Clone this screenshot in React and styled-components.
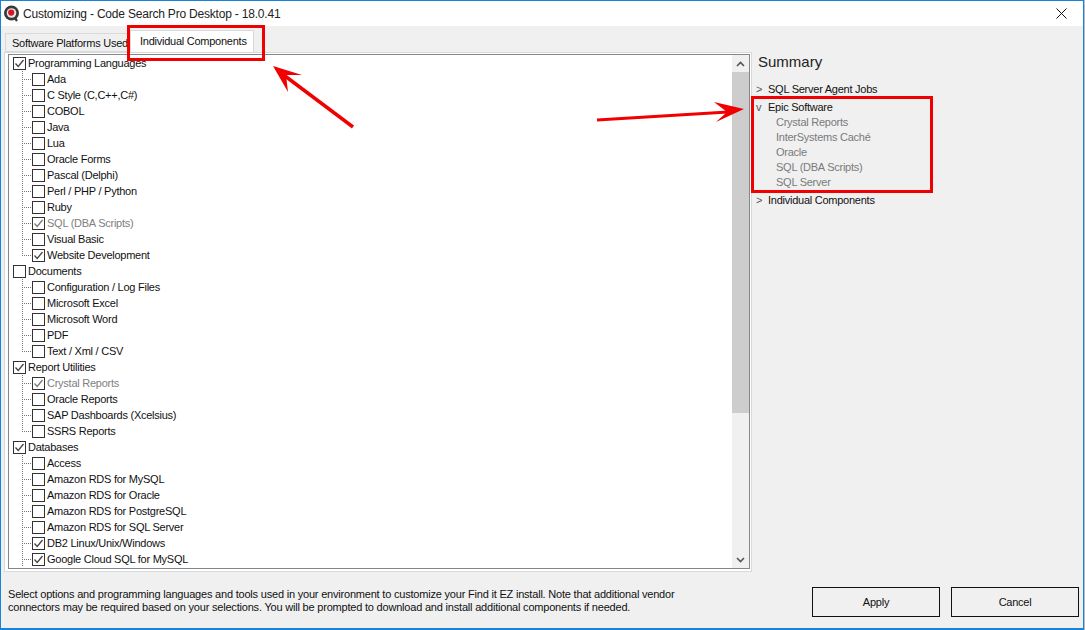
import styled, { createGlobalStyle } from 'styled-components';

const GlobalStyle = createGlobalStyle`
  html, body { margin: 0; padding: 0; background: #b9bcbf; }
  body { font-family: "Liberation Sans", Arial, sans-serif; }
  * { box-sizing: border-box; }
`;

const TREE = [
  { label: 'Programming Languages', checked: true, items: [
    { label: 'Ada' }, { label: 'C Style (C,C++,C#)' }, { label: 'COBOL' }, { label: 'Java' }, { label: 'Lua' },
    { label: 'Oracle Forms' }, { label: 'Pascal (Delphi)' }, { label: 'Perl / PHP / Python' }, { label: 'Ruby' },
    { label: 'SQL (DBA Scripts)', checked: true, disabled: true }, { label: 'Visual Basic' },
    { label: 'Website Development', checked: true },
  ] },
  { label: 'Documents', items: [
    { label: 'Configuration / Log Files' }, { label: 'Microsoft Excel' }, { label: 'Microsoft Word' }, { label: 'PDF' },
    { label: 'Text / Xml / CSV' },
  ] },
  { label: 'Report Utilities', checked: true, items: [
    { label: 'Crystal Reports', checked: true, disabled: true }, { label: 'Oracle Reports' },
    { label: 'SAP Dashboards (Xcelsius)' }, { label: 'SSRS Reports' },
  ] },
  { label: 'Databases', checked: true, open: true, items: [
    { label: 'Access' }, { label: 'Amazon RDS for MySQL' }, { label: 'Amazon RDS for Oracle' },
    { label: 'Amazon RDS for PostgreSQL' }, { label: 'Amazon RDS for SQL Server' },
    { label: 'DB2 Linux/Unix/Windows', checked: true }, { label: 'Google Cloud SQL for MySQL', checked: true },
  ] },
];

const EPIC = ['Crystal Reports', 'InterSystems Caché', 'Oracle', 'SQL (DBA Scripts)', 'SQL Server'];

const Window = styled.div`
  position: relative;
  width: 1084px;
  height: 630px;
  display: flex;
  flex-direction: column;
  overflow: hidden;
  background: #f0f0f0;
  border-top: 1px solid #1883d7;
  border-left: 1px solid #1883d7;
  border-right: 1px solid #1883d7;
  border-bottom: 2px solid #1883d7;
  font-size: 11px;
  letter-spacing: -0.25px;
  color: #111;
`;

const TitleBar = styled.div`
  height: 25px;
  flex: none;
  display: flex;
  align-items: center;
  padding: 0 16px 0 2px;
  background: #fff;
`;

const TitleText = styled.span`
  margin-left: 3px;
  font-size: 12px;
  letter-spacing: -0.2px;
  color: #222;
`;

const CloseButton = styled.svg`
  margin-left: auto;
  width: 11px;
  height: 11px;
`;

const Main = styled.div`
  display: flex;
  padding-left: 3px;
`;

const TabArea = styled.div`
  width: 748px;
  flex: none;
`;

const TabStrip = styled.div`
  height: 26px;
  display: flex;
  align-items: flex-end;
  padding-left: 1px;
`;

const Tab = styled.div`
  height: ${(p) => (p.$active ? '22px' : '19px')};
  width: ${(p) => (p.$active ? '124px' : '125px')};
  padding: ${(p) => (p.$active ? '4px 0 0 9px' : '3px 0 0 6px')};
  background: ${(p) => (p.$active ? '#fff' : '#f0f0f0')};
  border: 1px solid #d9d9d9;
  border-bottom: ${(p) => (p.$active ? '0' : '1px solid #d9d9d9')};
  white-space: nowrap;
`;

const TabPanel = styled.div`
  height: 520px;
  padding: 1px 1px 2px 3px;
  background: #fff;
  border: 1px solid #d9d9d9;
`;

const TreeBox = styled.div`
  height: 100%;
  display: flex;
  border: 1px solid #828790;
  background: #fff;
`;

const TreeList = styled.div`
  flex: 1;
  padding: 0 0 0 4px;
  overflow: hidden;
`;

const Row = styled.div`
  height: 16px;
  display: flex;
  align-items: center;
  white-space: nowrap;
  color: ${(p) => (p.$disabled ? '#808080' : '#111')};
`;

const Connector = styled.span`
  width: 10px;
  height: 16px;
  margin-left: 9px;
  flex: none;
  background-image:
    repeating-linear-gradient(to bottom, #777 0 1px, transparent 1px 2px),
    repeating-linear-gradient(to right, #777 0 1px, transparent 1px 2px);
  background-size: 1px ${(p) => (p.$end ? '9px' : '16px')}, 10px 1px;
  background-position: 0 0, 0 8px;
  background-repeat: no-repeat;
`;

const Box = styled.span`
  width: 13px;
  height: 13px;
  flex: none;
  margin-right: 2px;
  display: flex;
  align-items: center;
  justify-content: center;
  background: #fff;
  border: 1px solid #333;
`;

const Check = styled.svg`
  width: 11px;
  height: 11px;
`;

const ScrollBar = styled.div`
  width: 17px;
  flex: none;
  display: flex;
  flex-direction: column;
  background: #f0f0f0;
`;

const ScrollArrow = styled.div`
  height: 17px;
  flex: none;
  display: flex;
  align-items: center;
  justify-content: center;
`;

const ScrollThumb = styled.div`
  height: 341px;
  flex: none;
  background: #cdcdcd;
`;

const ScrollGap = styled.div`
  flex: 1;
`;

const Summary = styled.div`
  flex: 1;
  padding: 0 0 0 4px;
`;

const SummaryTitle = styled.div`
  padding: 27px 0 0 2px;
  margin-bottom: 11px;
  font-size: 15px;
  letter-spacing: 0;
  line-height: 18px;
  color: #222;
`;

const SummaryRow = styled.div`
  height: 15px;
  line-height: 15px;
  display: flex;
  margin-top: ${(p) => (p.$first ? '0' : '3px')};
`;

const Chevron = styled.span`
  width: 12px;
  flex: none;
  color: #555;
`;

const SummaryItem = styled.div`
  height: 15px;
  line-height: 15px;
  padding-left: 20px;
  color: #7a7a7a;
`;

const Footer = styled.div`
  display: flex;
  padding: 15px 4px 0 7px;
`;

const Note = styled.p`
  width: 720px;
  margin: 0;
  padding-top: 1px;
  line-height: 13px;
  letter-spacing: -0.2px;
  color: #111;
`;

const Buttons = styled.div`
  margin-left: auto;
  display: flex;
  gap: 11px;
`;

const Button = styled.button`
  width: 128px;
  height: 30px;
  background: #f0f0f0;
  border: 1px solid #111;
  font: inherit;
  letter-spacing: inherit;
  color: #111;
  padding: 0;
`;

const Annotations = styled.svg`
  position: absolute;
  left: -1px;
  top: -1px;
  width: 1085px;
  height: 630px;
  pointer-events: none;
`;

function CheckBox({ checked, disabled }) {
  return (
    <Box>
      {checked && (
        <Check viewBox="0 0 11 11">
          <path d="M1.5 5.5 L4.2 8.5 L9.5 2" fill="none" stroke={disabled ? '#777' : '#444'} strokeWidth="1.3" />
        </Check>
      )}
    </Box>
  );
}

function Logo() {
  return (
    <svg width="17" height="17" viewBox="0 0 17 17">
      <path d="M10.5 11 L14 16" stroke="#3a3a3a" strokeWidth="2.2" />
      <circle cx="8.5" cy="8" r="7.5" fill="#3a3a3a" />
      <circle cx="8.5" cy="8" r="4.8" fill="#e9e4e4" />
      <circle cx="8.2" cy="7.6" r="3.1" fill="#d3142c" />
    </svg>
  );
}

function Tree() {
  return (
    <TreeList>
      {TREE.map((group) => (
        <div key={group.label}>
          <Row>
            <CheckBox checked={group.checked} />
            {group.label}
          </Row>
          {group.items.map((item, i) => (
            <Row key={item.label} $disabled={item.disabled}>
              <Connector $end={!group.open && i === group.items.length - 1} />
              <CheckBox checked={item.checked} disabled={item.disabled} />
              {item.label}
            </Row>
          ))}
        </div>
      ))}
    </TreeList>
  );
}

export default function App() {
  return (
    <Window>
      <GlobalStyle />
      <TitleBar>
        <Logo />
        <TitleText>Customizing - Code Search Pro Desktop - 18.0.41</TitleText>
        <CloseButton viewBox="0 0 11 11">
          <path d="M.5 .5 L10.5 10.5 M10.5 .5 L.5 10.5" stroke="#111" strokeWidth="1" fill="none" />
        </CloseButton>
      </TitleBar>
      <Main>
        <TabArea>
          <TabStrip>
            <Tab>Software Platforms Used</Tab>
            <Tab $active>Individual Components</Tab>
          </TabStrip>
          <TabPanel>
            <TreeBox>
              <Tree />
              <ScrollBar>
                <ScrollArrow>
                  <svg width="9" height="6" viewBox="0 0 9 6">
                    <path d="M1 5 L4.5 1.5 L8 5" fill="none" stroke="#555" strokeWidth="1.6" />
                  </svg>
                </ScrollArrow>
                <ScrollThumb />
                <ScrollGap />
                <ScrollArrow>
                  <svg width="9" height="6" viewBox="0 0 9 6">
                    <path d="M1 1 L4.5 4.5 L8 1" fill="none" stroke="#555" strokeWidth="1.6" />
                  </svg>
                </ScrollArrow>
              </ScrollBar>
            </TreeBox>
          </TabPanel>
        </TabArea>
        <Summary>
          <SummaryTitle>Summary</SummaryTitle>
          <SummaryRow $first><Chevron>&gt;</Chevron>SQL Server Agent Jobs</SummaryRow>
          <SummaryRow><Chevron>v</Chevron>Epic Software</SummaryRow>
          {EPIC.map((name) => (
            <SummaryItem key={name}>{name}</SummaryItem>
          ))}
          <SummaryRow><Chevron>&gt;</Chevron>Individual Components</SummaryRow>
        </Summary>
      </Main>
      <Footer>
        <Note>
          Select options and programming languages and tools used in your environment to customize your Find it EZ install. Note that additional vendor
          <br />
          connectors may be required based on your selections. You will be prompted to download and install additional components if needed.
        </Note>
        <Buttons>
          <Button>Apply</Button>
          <Button>Cancel</Button>
        </Buttons>
      </Footer>
      <Annotations viewBox="0 0 1085 630">
        <rect x="128.5" y="26.5" width="135" height="33" fill="none" stroke="#f00000" strokeWidth="3" />
        <rect x="752.5" y="97.5" width="179" height="94" fill="none" stroke="#f00000" strokeWidth="3" />
        <path d="M353 127 L285 76" stroke="#f00000" strokeWidth="3.5" fill="none" />
        <path d="M273 66 L302 75 L286 75 L288 92 Z" fill="#f00000" />
        <path d="M597 120 L728 112" stroke="#f00000" strokeWidth="3" fill="none" />
        <path d="M744 109 L714 102 L727 112 L716 122 Z" fill="#f00000" />
      </Annotations>
    </Window>
  );
}
